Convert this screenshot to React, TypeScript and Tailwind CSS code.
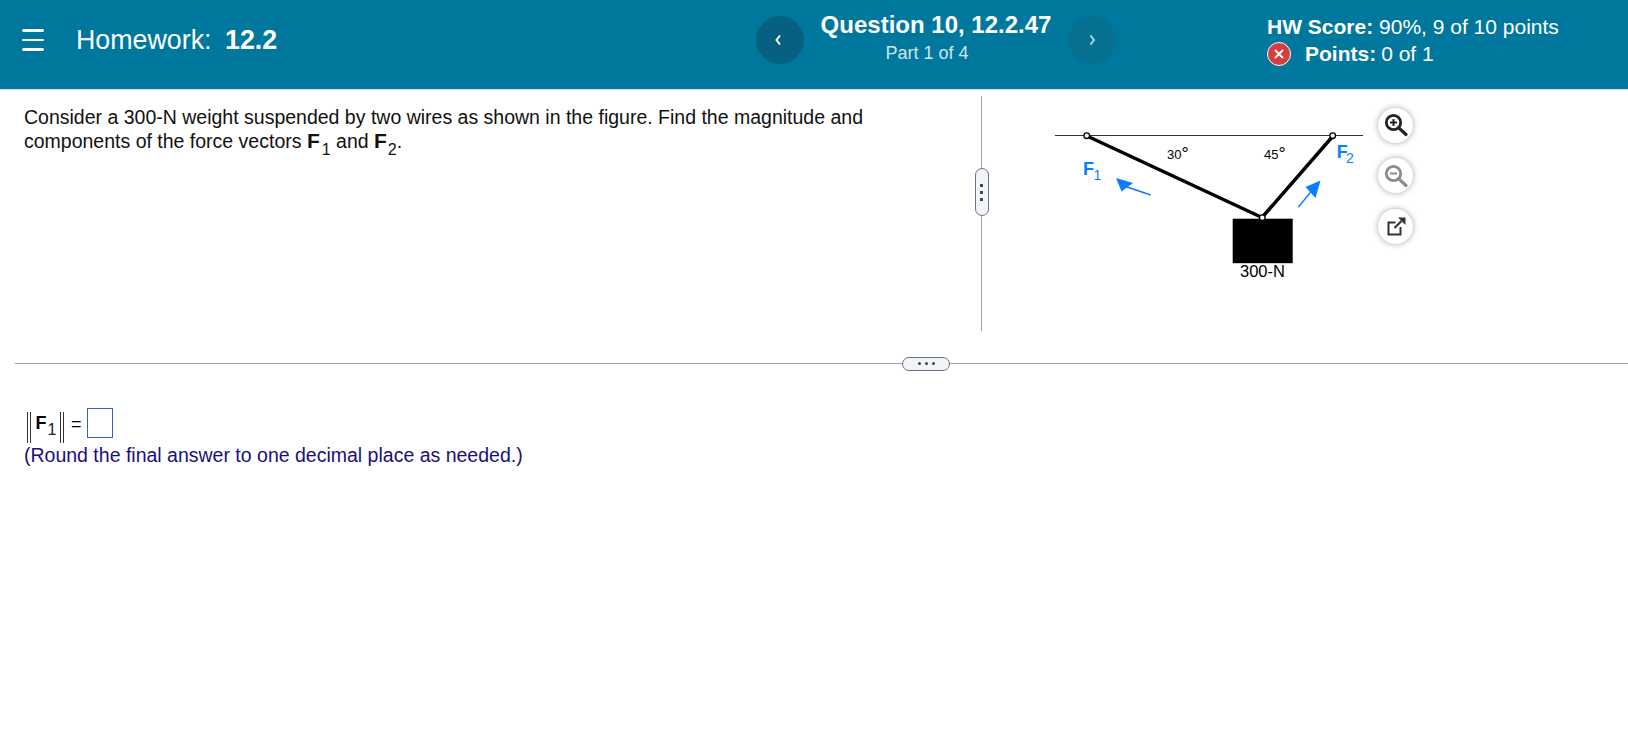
import React from 'react';

const ArrowBlue = "#0a7cff";
const figFont = "Liberation Sans, Arial, sans-serif";

const Figure = () => (
  <svg width="320" height="190" viewBox="0 0 320 190" className="shrink-0">
    <line x1="0" y1="35.5" x2="308" y2="35.5" stroke="#333" strokeWidth="1.2" />
    <line x1="32" y1="36" x2="207" y2="117.5" stroke="#000" strokeWidth="3.5" />
    <line x1="278" y1="36" x2="207" y2="117.5" stroke="#000" strokeWidth="3.5" />
    <rect x="177.7" y="118.7" width="60" height="44.5" fill="#000" />
    <circle cx="31.7" cy="35.7" r="2.8" fill="#fff" stroke="#000" strokeWidth="1.3" />
    <circle cx="277.7" cy="35.7" r="2.8" fill="#fff" stroke="#000" strokeWidth="1.3" />
    <circle cx="207.3" cy="117.7" r="2.8" fill="#fff" stroke="#000" strokeWidth="1.3" />
    <text x="112" y="59" fontSize="13" fontFamily={figFont} fill="#000">30<tspan fontSize="18" dy="1">°</tspan></text>
    <text x="209" y="59" fontSize="13" fontFamily={figFont} fill="#000">45<tspan fontSize="18" dy="1">°</tspan></text>
    <text x="185" y="177" fontSize="16.5" fontFamily={figFont} fill="#000">300-N</text>
    <text x="28" y="75" fontSize="18" fontWeight="700" fontFamily={figFont} fill={ArrowBlue}>F</text>
    <text x="38.5" y="80" fontSize="14" fontFamily={figFont} fill={ArrowBlue}>1</text>
    <text x="281.7" y="58" fontSize="18" fontWeight="700" fontFamily={figFont} fill={ArrowBlue}>F</text>
    <text x="291" y="63" fontSize="14" fontFamily={figFont} fill={ArrowBlue}>2</text>
    <line x1="72" y1="87" x2="95.7" y2="95" stroke={ArrowBlue} strokeWidth="1.4" />
    <polygon points="61,78 66.5,91.5 78,83" fill={ArrowBlue} />
    <line x1="243.3" y1="107.3" x2="255.5" y2="92.3" stroke={ArrowBlue} strokeWidth="1.4" />
    <polygon points="265.5,80.5 250.5,87 260.5,98" fill={ArrowBlue} />
  </svg>
);

const ZoomIcon = ({ kind, color }: { kind: 'in' | 'out'; color: string }) => (
  <svg width="26" height="26" viewBox="0 0 26 26" fill="none">
    <circle cx="10.5" cy="10.5" r="7.2" stroke={color} strokeWidth="2.8" />
    <line x1="15.8" y1="15.8" x2="23" y2="22.5" stroke={color} strokeWidth="3.2" strokeLinecap="round" />
    <line x1="7" y1="10.5" x2="14" y2="10.5" stroke={color} strokeWidth="2" />
    {kind === 'in' && <line x1="10.5" y1="7" x2="10.5" y2="14" stroke={color} strokeWidth="2" />}
  </svg>
);

const PopoutIcon = () => (
  <svg width="26" height="26" viewBox="0 0 26 26" fill="none">
    <path d="M12.5 9.5H5.5V21.5H17.5V14" stroke="#333" strokeWidth="2" />
    <path d="M11.5 15L18.5 8" stroke="#333" strokeWidth="2.2" />
    <path d="M15 4.5H22.5V12Z" fill="#333" />
  </svg>
);

const RoundBtn = ({ children }: { children: React.ReactNode }) => (
  <div className="w-[35px] h-[35px] rounded-full bg-white shadow-[0_0_6px_rgba(0,0,0,0.35)] flex items-center justify-center">
    {children}
  </div>
);

export default function App() {
  return (
    <div className="min-h-[747px] bg-white font-['Liberation_Sans',Arial,sans-serif] text-black overflow-hidden">
      {/* top bar */}
      <header className="h-[90px] bg-[#00789e] border-b border-[#c9dfe8] flex text-white">
        <div className="w-[756px] flex items-center pl-[22px] pb-[9px]">
          <div className="w-[22px] flex flex-col gap-[7px]">
            <div className="h-[2.5px] bg-white rounded" />
            <div className="h-[2.5px] bg-white rounded" />
            <div className="h-[2.5px] bg-white rounded" />
          </div>
          <span className="ml-[32px] text-[26.8px]">Homework:</span>
          <span className="ml-[13.5px] text-[26.8px] font-bold">12.2</span>
        </div>
        <div className="w-[48px] h-[48px] mt-[16px] rounded-full bg-[#07607f] flex items-center justify-center">
          <svg width="10" height="14" viewBox="0 0 10 14" fill="none">
            <path d="M5 2.5L1.5 7L5 11.5" stroke="#fff" strokeWidth="2" />
          </svg>
        </div>
        <div className="w-[264px] flex flex-col items-center pt-[11px]">
          <span className="text-[24px] leading-[28px] font-bold">Question 10, 12.2.47</span>
          <span className="text-[18px] leading-[24px] mt-[2px] mr-[18px] text-[#cfe4ec]">Part 1 of 4</span>
        </div>
        <div className="w-[48px] h-[48px] mt-[16px] rounded-full bg-[#067090] flex items-center justify-center">
          <svg width="10" height="14" viewBox="0 0 10 14" fill="none">
            <path d="M3.5 2.5L7 7L3.5 11.5" stroke="#b5d3de" strokeWidth="2" />
          </svg>
        </div>
        <div className="ml-[151px] pt-[13px] flex flex-col text-[21px] leading-[27px]">
          <div>
            <span className="font-bold">HW Score:</span> 90%, 9 of 10 points
          </div>
          <div className="flex items-center">
            <span className="w-[24px] h-[24px] rounded-full bg-[#d23f3f] border border-white flex items-center justify-center">
              <svg width="10" height="10" viewBox="0 0 10 10" fill="none">
                <path d="M1 1L9 9M9 1L1 9" stroke="#fff" strokeWidth="1.8" />
              </svg>
            </span>
            <span className="ml-[14px] font-bold">Points:</span>
            <span className="ml-[5px]">0 of 1</span>
          </div>
        </div>
      </header>

      {/* question panes */}
      <div className="flex h-[235px] mt-[6px]">
        <div className="w-[981px] pl-[24px] pt-[9px] pr-[100px] text-[19.5px] leading-[24px] text-[#111]">
          <p>Consider a 300-N weight suspended by two wires as shown in the figure. Find the magnitude and</p>
          <p>
            components of the force vectors <b className="text-[21px]">F</b>
            <sub className="text-[16px] bottom-[-7px] leading-none ml-[2px]">1</sub> and <b className="text-[21px]">F</b>
            <sub className="text-[16px] bottom-[-7px] leading-none ml-[1px]">2</sub>.
          </p>
        </div>
        <div className="relative w-px h-full bg-[#b59aa6]">
          <div className="absolute left-[-6.5px] top-[72px] w-[14px] h-[48px] rounded-full bg-[#f3f4f6] border-[1.5px] border-[#64748b] flex flex-col items-center justify-center gap-[4px]">
            <span className="w-[3px] h-[3px] bg-[#444]" />
            <span className="w-[3px] h-[3px] bg-[#444]" />
            <span className="w-[3px] h-[3px] bg-[#444]" />
          </div>
        </div>
        <div className="flex pl-[73px] pt-[4px]">
          <Figure />
          <div className="flex flex-col gap-[15.5px] mt-[7.5px] ml-[3px]">
            <RoundBtn><ZoomIcon kind="in" color="#222" /></RoundBtn>
            <RoundBtn><ZoomIcon kind="out" color="#8a8a8a" /></RoundBtn>
            <RoundBtn><PopoutIcon /></RoundBtn>
          </div>
        </div>
      </div>

      {/* horizontal splitter */}
      <div className="relative ml-[15px] h-px mt-[32px] bg-[#b59aa6]">
        <div className="absolute left-[887px] top-[-6.5px] w-[48px] h-[14px] rounded-full bg-[#f3f4f6] border-[1.5px] border-[#64748b] flex items-center justify-center gap-[4px]">
          <span className="w-[3px] h-[3px] rounded-full bg-[#444]" />
          <span className="w-[3px] h-[3px] rounded-full bg-[#444]" />
          <span className="w-[3px] h-[3px] rounded-full bg-[#444]" />
        </div>
      </div>

      {/* answer */}
      <div className="pl-[24px] pt-[44px]">
        <div className="flex items-start h-[36px]">
          <span className="mt-[4px] ml-[3px] w-[4px] h-[31px] border-x border-[#333]" />
          <span className="ml-[4.5px] mt-[5px] text-[18px] font-bold leading-[20px]">F</span>
          <span className="ml-[1px] mt-[12px] text-[16px] leading-[20px] text-[#222]">1</span>
          <span className="ml-[3.5px] mt-[4px] w-[4px] h-[31px] border-x border-[#333]" />
          <span className="ml-[7px] mt-[6px] text-[18px] leading-[20px]">=</span>
          <span className="ml-[5.5px] w-[26px] h-[30px] border border-[#2f66c4] bg-white" />
        </div>
        <p className="text-[19.5px] leading-[24px] -mt-[1px] text-[#1a0f80]">(Round the final answer to one decimal place as needed.)</p>
      </div>
    </div>
  );
}
